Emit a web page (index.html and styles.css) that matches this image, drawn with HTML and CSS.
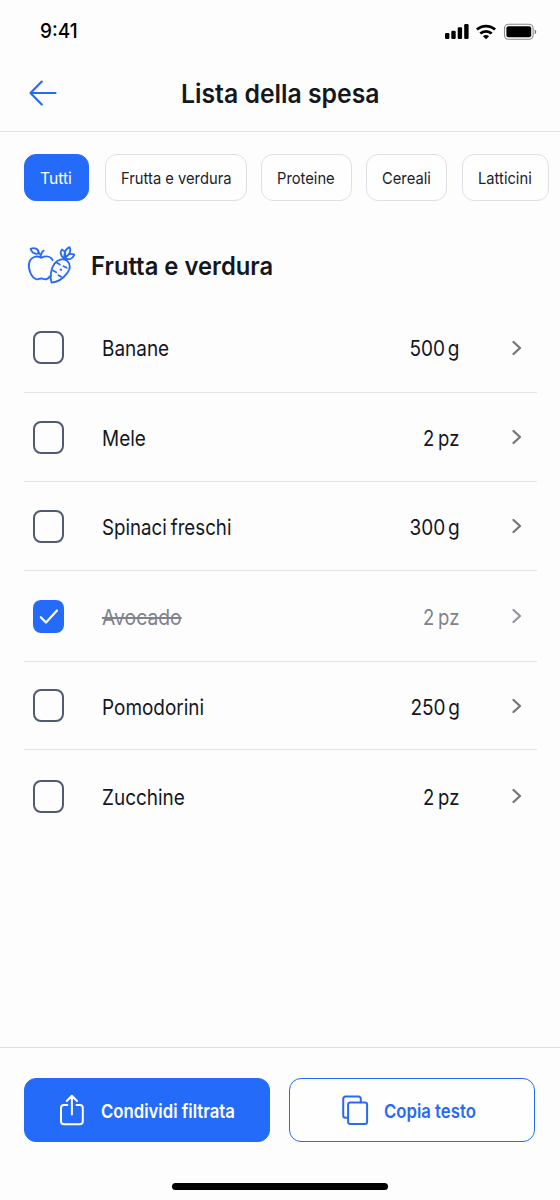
FILE: index.html
```html
<!DOCTYPE html>
<html lang="it">
<head>
<meta charset="utf-8">
<title>Lista della spesa</title>
<link rel="stylesheet" href="styles.css">
</head>
<body>
<div class="screen">
  <div class="status">
    <span class="t time">9:41</span>
    <svg class="status-icons" width="94" height="18" viewBox="0 0 94 18">
      <rect x="1" y="11" width="4.4" height="6" rx="1.3"/>
      <rect x="7.3" y="8.7" width="4.4" height="8.3" rx="1.3"/>
      <rect x="13.7" y="5.2" width="4.4" height="11.8" rx="1.3"/>
      <rect x="20.2" y="2" width="4.4" height="15" rx="1.3"/>
      <g fill="none" stroke="#000" stroke-width="2.7">
        <path d="M32.9 7.6a13.4 13.4 0 0 1 18.2 0"/>
        <path d="M36.3 11.6a8.3 8.3 0 0 1 11.4 0"/>
      </g>
      <path d="M38.9 14.3a4.6 4.6 0 0 1 6.2 0L42 17.3z"/>
      <rect x="60.5" y="2.2" width="28.6" height="15" rx="4" fill="none" stroke="#8a8a8a" stroke-width="1.1"/>
      <rect x="62.4" y="4.2" width="24.8" height="11" rx="2"/>
      <path d="M90.7 7.4c2 .8 2 3.800 0 4.600z" fill="#777"/>
    </svg>
  </div>
  <header class="header">
    <svg class="back" width="30" height="28" viewBox="0 0 30 28"><path d="M27.500 14H3M13.800 2.600 2.500 14l11.300 11.400"/></svg>
    <h1 class="t title">Lista della spesa</h1>
  </header>
  <nav class="chips">
    <button class="chip on c1"><span class="t">Tutti</span></button>
    <button class="chip c2"><span class="t">Frutta e verdura</span></button>
    <button class="chip c3"><span class="t">Proteine</span></button>
    <button class="chip c4"><span class="t">Cereali</span></button>
    <button class="chip c5"><span class="t">Latticini</span></button>
  </nav>
  <section class="section-head">
    <svg class="produce" width="50" height="40" viewBox="0 0 50 40">
      <path d="M25.600 15.200C23.500 10.800 18.500 10.700 14.200 12.700 9.500 10.200 4 11.700 2.200 17.500.5 24 4.500 32.500 9.200 34.200c2 .6 3.200-.7 5.100-.7s3.300 1.300 5.300.6c1.300-.5 2.700-1.700 3.900-3.200"/>
      <path d="M14.200 12.700c-.2-2.500-1.200-4.400-3.200-5.600M3.600 3.800c3.700-1.500 7.800-.5 8.400 4.700-4 1-7.200-.6-8.400-4.700zM14.300 9.500c.2-1.900 1-3 2.300-3.900"/>
      <path d="M24.500 37.600c-1.800-6-.6-14.500 3.200-19.200 3.500-4.400 9.500-5.400 12.800-2.300 3.200 3.400 2.600 8-.3 12-3.600 4.800-9.700 9-15.700 9.500z"/>
      <path d="M29.200 17.200l3.600 2.400M36.500 21.200l3.200 1.600M26 25.500l3.200 1.700M33.500 24.500l.8.500M31.500 30.200l2.600 1.600"/>
      <path d="M37 13.500c-3.800-3.400-4.300-6.200-2-9 3.400 1.700 4.400 4.800 2 9zM37.600 13c-.8-5 .7-9 5-10.900 1.700 4-.4 8.200-5 10.900zM38.200 13.400c2-3.700 5.200-5.500 9.100-3.800-1.600 4-4.700 5.700-9.100 3.800z"/>
    </svg>
    <h2 class="t subtitle">Frutta e verdura</h2>
  </section>
  <ul class="list">
    <li class="row r1"><span class="box"></span><span class="t name">Banane</span><span class="t qty">500 g</span><svg class="chev" width="12" height="18" viewBox="0 0 12 18"><path d="m2.500 3 6.500 6-6.500 6"/></svg></li>
    <li class="row r2"><span class="box"></span><span class="t name">Mele</span><span class="t qty pz">2 pz</span><svg class="chev" width="12" height="18" viewBox="0 0 12 18"><path d="m2.500 3 6.500 6-6.500 6"/></svg></li>
    <li class="row r3"><span class="box"></span><span class="t name">Spinaci freschi</span><span class="t qty">300 g</span><svg class="chev" width="12" height="18" viewBox="0 0 12 18"><path d="m2.500 3 6.500 6-6.500 6"/></svg></li>
    <li class="row r4 done"><span class="box"><svg width="31" height="33" viewBox="0 0 31 33"><path d="m7.800 17.200 5.200 5.300L24 10.500"/></svg></span><span class="t name">Avocado</span><span class="t qty pz">2 pz</span><svg class="chev" width="12" height="18" viewBox="0 0 12 18"><path d="m2.500 3 6.500 6-6.500 6"/></svg></li>
    <li class="row r5"><span class="box"></span><span class="t name">Pomodorini</span><span class="t qty">250 g</span><svg class="chev" width="12" height="18" viewBox="0 0 12 18"><path d="m2.500 3 6.500 6-6.500 6"/></svg></li>
    <li class="row r6"><span class="box"></span><span class="t name">Zucchine</span><span class="t qty pz">2 pz</span><svg class="chev" width="12" height="18" viewBox="0 0 12 18"><path d="m2.500 3 6.500 6-6.500 6"/></svg></li>
  </ul>
  <footer class="footer">
    <div class="actions">
      <button class="btn primary">
        <svg width="26" height="34" viewBox="0 0 26 34"><path d="M8.300 12H5a3 3 0 0 0-3 3v13.300a3 3 0 0 0 3 3h15.800a3 3 0 0 0 3-3V15a3 3 0 0 0-3-3h-3.300M12.900 21.500V3M7.800 8l5.100-5.200L18 8"/></svg>
        <span class="t">Condividi filtrata</span>
      </button>
      <button class="btn secondary">
        <svg width="28" height="32" viewBox="0 0 28 32"><path d="M6.500 23.800H4.500A2.300 2.300 0 0 1 2.200 21.500V4.800A2.300 2.300 0 0 1 4.500 2.500h13a2.300 2.300 0 0 1 2.300 2.300v3.500"/><rect x="7.100" y="8.500" width="19" height="21.500" rx="2.300"/></svg>
        <span class="t">Copia testo</span>
      </button>
    </div>
    <div class="home"></div>
  </footer>
</div>
</body>
</html>
```
FILE: styles.css
```css
* { box-sizing: border-box; }
body { margin: 0; background: #fdfdfe; font-family: Inter, "Liberation Sans", sans-serif; color: #15171f; }
h1, h2, ul { margin: 0; padding: 0; }
button { font: inherit; padding: 0; }
.screen { width: 560px; height: 1200px; display: flex; flex-direction: column; overflow: hidden; }
.t { display: block; white-space: nowrap; transform-origin: 0 50%; }
svg { display: block; flex: none; }

.status { height: 62px; display: flex; justify-content: space-between; align-items: center; padding: 0 22px 0 40px; }
.time { margin-top: -1px; font-size: 20px; font-weight: 500; color: #000; transform: scaleX(.95); }

.header { height: 70px; display: grid; grid-template-columns: 152.5px 1fr; align-items: center; padding: 0 28px; border-bottom: 1px solid #e3e4e8; }
.back { margin-top: -8px; fill: none; stroke: #2869f8; stroke-width: 2.2; stroke-linecap: round; stroke-linejoin: round; }
.title { margin-top: -5px; font-size: 26px; line-height: 32px; font-weight: 600; transform: scaleX(.953); }

.chips { display: flex; padding: 22px 0 0 24px; height: 69px; }
.chip { flex: none; height: 47px; display: flex; align-items: center; border: 1px solid #dfe0e5; border-radius: 12px; background: #fefefe; color: #20222a; font-size: 16.5px; font-weight: 375; padding-left: 15px; text-align: left; overflow: hidden; }
.chip .t { transform: scaleX(.893); }
.chip.on { background: #256bfa; border-color: #256bfa; color: #fff; }
.c1 { width: 65px; margin-right: 16px; }
.chip.c1 .t { transform: scaleX(.95); }
.c2 { width: 142px; margin-right: 14px; }
.c3 { width: 91px; margin-right: 14px; }
.c4 { width: 81px; margin-right: 15px; }
.c5 { width: 87px; }

.section-head { height: 102px; display: flex; align-items: flex-start; gap: 14px; padding: 44px 0 0 27px; }
.produce { fill: none; stroke: #2869f8; stroke-width: 1.8; stroke-linecap: round; stroke-linejoin: round; }
.subtitle { margin-top: 5px; font-size: 25px; line-height: 32px; font-weight: 600; transform: scaleX(.952); }

.list { list-style: none; margin: 0 23px 0 24px; }
.row { display: grid; grid-template-columns: 31px 1fr auto 12px; align-items: center; padding: 0 14px 0 9px; border-bottom: 1px solid #e3e4e7; }
.r1 { height: 90px; } .r2, .r3 { height: 89px; } .r4 { height: 91px; } .r5 { height: 88px; } .r6 { height: 92px; border-bottom: 0; }
.box { width: 31px; height: 33px; border: 2px solid #505a70; border-radius: 8px; }
.name { margin-left: 37.5px; padding-top: 1px; font-size: 21.5px; font-weight: 370; word-spacing: -1.5px; transform: scaleX(.882); }
.r3 .name { transform: scaleX(.87); }
.qty { margin-right: 51.5px; padding-top: 1px; font-size: 21.5px; font-weight: 370; word-spacing: -3px; transform-origin: 100% 50%; transform: scaleX(.885); }
.pz { word-spacing: -1.5px; transform: scaleX(.86); }
.r2 .t, .r3 .t, .r4 .t, .r5 .t { padding-top: 2px; }
.chev { fill: none; stroke: #74767b; stroke-width: 2.3; stroke-linecap: round; stroke-linejoin: round; }
.done { color: #80828b; }
.done .name { text-decoration: line-through; text-decoration-thickness: 1.5px; transform: scaleX(.9); }
.done .chev { stroke: #94969f; }
.done .box { border: 0; background: #256bfa; }
.done .box path { fill: none; stroke: #fff; stroke-width: 2.2; stroke-linecap: round; stroke-linejoin: round; }

.footer { margin-top: auto; height: 153px; border-top: 1px solid #dcdde0; padding: 30px 25px 0 24px; }
.actions { display: grid; grid-template-columns: 246px 246px; gap: 19px; }
.btn { height: 64px; border-radius: 12px; display: flex; align-items: center; font-size: 19px; font-weight: 560; text-align: left; border: 1px solid #256bfa; overflow: hidden; }
.btn svg { fill: none; stroke: currentColor; stroke-width: 2; stroke-linecap: round; stroke-linejoin: round; }
.btn .t { padding-top: 2px; transform: scaleX(.88); }
.primary { background: #256bfa; color: #fff; padding-left: 34px; gap: 16px; }
.secondary { background: #fefefe; color: #2869f8; padding-left: 51px; gap: 15px; }
.home { width: 216px; height: 7px; border-radius: 4px; background: #000; margin: 41px 0 0 148px; }
```
